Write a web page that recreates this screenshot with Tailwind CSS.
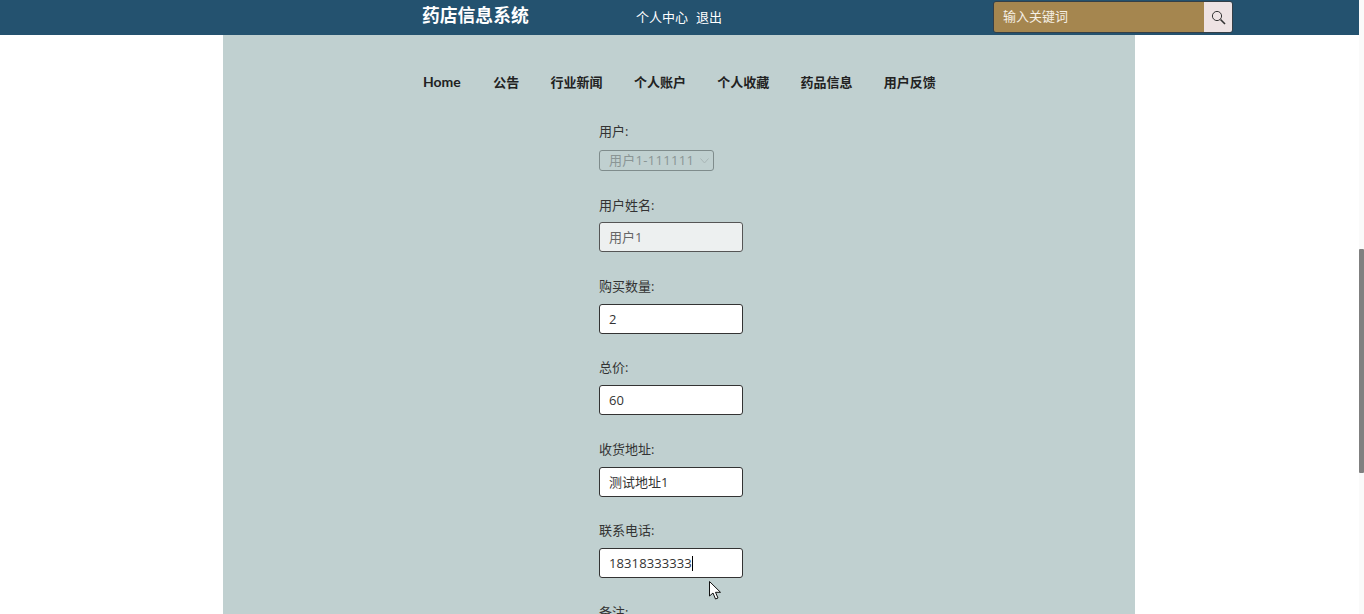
<!DOCTYPE html>
<html lang="zh">
<head>
  <meta charset="UTF-8">
  <title>药店信息系统</title>
  <script src="https://cdn.jsdelivr.net/npm/@tailwindcss/browser@4"></script>
</head>
<body class="relative h-[614px] overflow-hidden bg-white font-['Lato','Noto_Sans_CJK_SC',sans-serif] text-[13px]">

  <!-- Top bar -->
  <header class="flex h-[35px] w-[1359px] bg-[#24526f] text-white">
    <div class="ml-[422px] w-[214px] pt-[3px] text-[17.8px] leading-[25px] font-bold">药店信息系统</div>
    <div class="flex gap-[8px] pt-[9px] text-[13px] leading-4">
      <span>个人中心</span>
      <span>退出</span>
    </div>
    <div class="mt-px ml-[271px] flex h-[32px] w-[240px] overflow-hidden rounded-[3px] border border-[#343f47]">
      <div class="flex-1 bg-[#a5864f] pl-[9px] text-[13px] leading-[29px] text-[#f5f0e6]">输入关键词</div>
      <div class="flex w-[28px] items-center justify-center bg-[#eee3e4]">
        <svg width="15" height="15" viewBox="0 0 15 15" fill="none" stroke="#333" stroke-width="1">
          <circle cx="6" cy="6" r="4.6"/>
          <path d="M9.5 9.5L14 14" stroke-width="1.6"/>
        </svg>
      </div>
    </div>
  </header>

  <!-- Main column -->
  <main class="ml-[223px] h-[579px] w-[912px] overflow-hidden bg-[#c0d0d0] text-[#333]">
    <nav class="flex gap-[31.3px] pt-[39px] pl-[200px] text-[13px] leading-4 font-bold text-[#222]">
      <span class="w-[39px] text-[14px]">Home</span>
      <span>公告</span>
      <span>行业新闻</span>
      <span>个人账户</span>
      <span>个人收藏</span>
      <span>药品信息</span>
      <span>用户反馈</span>
    </nav>

    <form class="ml-[376px] pt-[32px] font-['Open_Sans','Noto_Sans_CJK_SC',sans-serif]">
      <div class="h-[18px] leading-[18px]">用户:</div>
      <div class="mt-[10px] flex h-[21px] w-[115px] items-center justify-between rounded-[3px] border border-[#7f8c8c] pr-1 pl-[9px] text-[#8a9595]">
        <span class="tracking-[0.3px]">用户1-111111</span>
        <svg width="9" height="6" viewBox="0 0 9 6" fill="none" stroke="#a9b6b6"><path d="M0.5 0.5L4.5 5L8.5 0.5"/></svg>
      </div>

      <div class="mt-[25px] h-[18px] leading-[18px]">用户姓名:</div>
      <div class="mt-2 h-[30px] w-[144px] rounded-[3px] border border-[#555] bg-[#edf0f0] pl-[9px] leading-[29px] text-[#666]">用户1</div>

      <div class="mt-[25px] h-[18px] leading-[18px]">购买数量:</div>
      <div class="mt-[9px] h-[30px] w-[144px] rounded-[3px] border border-[#333] bg-white pl-[9px] leading-[29px]">2</div>

      <div class="mt-[24px] h-[18px] leading-[18px]">总价:</div>
      <div class="mt-[9px] h-[30px] w-[144px] rounded-[3px] border border-[#333] bg-white pl-[9px] leading-[29px]">60</div>

      <div class="mt-[25px] h-[18px] leading-[18px]">收货地址:</div>
      <div class="mt-[9px] h-[30px] w-[144px] rounded-[3px] border border-[#333] bg-white pl-[9px] leading-[29px]">测试地址1</div>

      <div class="mt-[24px] h-[18px] leading-[18px]">联系电话:</div>
      <div class="mt-[9px] h-[30px] w-[144px] rounded-[3px] border border-[#333] bg-white pl-[9px] leading-[29px] tracking-[0.1px]">18318333333<span class="inline-block h-[15px] w-px translate-y-[3px] bg-black"></span></div>

      <div class="mt-[25px] h-[18px] leading-[18px]">备注:</div>
    </form>
  </main>

  <!-- Scrollbar -->
  <div class="absolute top-0 right-0 h-[614px] w-[5px] bg-[#fafafa]">
    <div class="mt-[249px] h-[224px] w-[5px] rounded-[1px] bg-[#808080]"></div>
  </div>

  <!-- Mouse pointer -->
  <svg class="absolute top-[581px] left-[709px]" width="13" height="19" viewBox="0 0 13 19">
    <path d="M0.5 0.5V15L4 12L6.5 18L9 17L6.5 11.3H11.5Z" fill="#fff" stroke="#111" stroke-width="1"/>
  </svg>
</body>
</html>
